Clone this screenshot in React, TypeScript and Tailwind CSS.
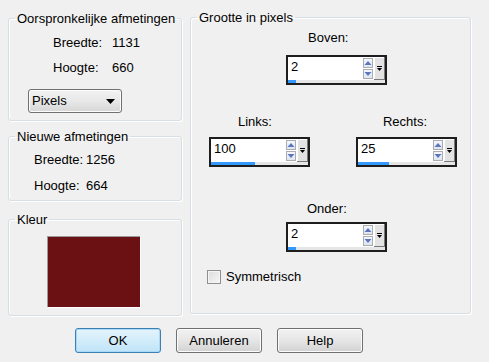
import React from "react";

const font = { fontFamily: '"Liberation Sans", Arial, sans-serif' };

function Group({
  title,
  className,
  children,
}: {
  title: string;
  className: string;
  children?: React.ReactNode;
}) {
  return (
    <fieldset
      className={`rounded-[3px] border border-[#d5dfe5] shadow-[inset_1px_1px_0_#fff,1px_1px_0_#fff] ${className}`}
    >
      <legend className="ml-[6px] px-[2px] leading-[15px]">{title}</legend>
      {children}
    </fieldset>
  );
}

function Arrow({ up }: { up?: boolean }) {
  return (
    <div className="flex h-[10px] w-[10px] items-center justify-center border border-[#a9acb3] bg-gradient-to-b from-[#f4f7fb] to-[#dfe6ef]">
      <svg width="8" height="6" viewBox="0 0 8 6">
        {up ? (
          <path d="M0.5 5 L4 1 L7.5 5 Z" fill="#5c75c0" />
        ) : (
          <path d="M0.5 1 L4 5 L7.5 1 Z" fill="#5c75c0" />
        )}
      </svg>
    </div>
  );
}

function Spin({ value, bar }: { value: string; bar: string }) {
  return (
    <div className="flex h-[30px] w-[101px] flex-col border-2 border-[#1e1e1e] bg-white">
      <div className="flex h-[23px]">
        <div className="flex-1 pl-[3px] pt-[2px] leading-[15px] text-black">{value}</div>
        <div className="mr-[1px] mt-[1px] flex flex-col gap-[1px]">
          <Arrow up />
          <Arrow />
        </div>
        <div className="flex h-[23px] w-[11px] items-center justify-center border-b border-r border-[#7a7a7a] bg-[#e3e3e3] shadow-[inset_1px_1px_0_#fff]">
          <svg width="7" height="7" viewBox="0 0 7 7">
            <rect x="1" y="1" width="5" height="1" fill="#000" />
            <path d="M1 3 L6 3 L3.5 6 Z" fill="#000" />
          </svg>
        </div>
      </div>
      <div className="h-[3px] bg-[#e6e6e6]">
        <div className={`h-[3px] bg-[#3399ff] ${bar}`} />
      </div>
    </div>
  );
}

function Button({ label, primary }: { label: string; primary?: boolean }) {
  return (
    <div
      className={
        primary
          ? "flex h-[25px] w-[86px] items-center justify-center rounded-[3px] border border-[#3c7fb1] bg-gradient-to-b from-[#e5f4fc] to-[#bfe4f8] shadow-[inset_0_0_0_1px_#a8d9f6] text-black"
          : "flex h-[25px] w-[86px] items-center justify-center rounded-[3px] border border-[#707070] bg-gradient-to-b from-[#f2f2f2] via-[#e6e6e6] to-[#d2d2d2] shadow-[inset_0_0_0_1px_#fcfcfc] text-black"
      }
    >
      {label}
    </div>
  );
}

export default function App() {
  return (
    <div
      className="h-[362px] w-[489px] overflow-hidden bg-[#f0f0f0] pl-[8px] pt-[10px] text-[13px] text-black"
      style={font}
    >
      <div className="flex items-start gap-[8px]">
        {/* left column */}
        <div className="flex flex-col pt-[1px]">
          <Group title="Oorspronkelijke afmetingen" className="h-[110px] w-[174px]">
            <div className="mt-[9px] flex flex-col gap-[10px] pl-[44px] leading-[15px]">
              <div className="grid grid-cols-[59px_auto]">
                <span>Breedte:</span>
                <span>1131</span>
              </div>
              <div className="grid grid-cols-[59px_auto]">
                <span>Hoogte:</span>
                <span>660</span>
              </div>
            </div>
            <div className="ml-[19px] mt-[14px] flex h-[24px] w-[94px] items-center justify-between rounded-[3px] border border-[#707070] bg-gradient-to-b from-[#f2f2f2] via-[#e8e8e8] to-[#d6d6d6] pl-[3px] pr-[6px] shadow-[inset_0_0_0_1px_#fcfcfc]">
              <span>Pixels</span>
              <svg width="9" height="5" viewBox="0 0 9 5">
                <path d="M0 0 L9 0 L4.5 5 Z" fill="#000" />
              </svg>
            </div>
          </Group>

          <Group title="Nieuwe afmetingen" className="mt-[8px] h-[72px] w-[174px]">
            <div className="mt-[8px] flex flex-col gap-[11px] pl-[25px] leading-[15px]">
              <div className="grid grid-cols-[52px_auto]">
                <span>Breedte:</span>
                <span>1256</span>
              </div>
              <div className="grid grid-cols-[52px_auto]">
                <span>Hoogte:</span>
                <span>664</span>
              </div>
            </div>
          </Group>

          <Group title="Kleur" className="mt-[11px] h-[104px] w-[174px]">
            <div className="ml-[38px] mt-[9px] h-[71px] w-[93px] border-l border-t border-l-[#9a9a9a] border-t-[#9a9a9a] bg-[#6c1113] shadow-[1px_1px_0_#fff]" />
          </Group>
        </div>

        {/* right column */}
        <Group title="Grootte in pixels" className="h-[304px] w-[281px]">
          <div className="ml-[117px] mt-[5px] leading-[15px]">Boven:</div>
          <div className="ml-[95px] mt-[10px]">
            <Spin value="2" bar="w-[8px]" />
          </div>

          <div className="mt-[29px] flex leading-[15px]">
            <span className="ml-[47px]">Links:</span>
            <span className="ml-[111px]">Rechts:</span>
          </div>
          <div className="mt-[8px] flex">
            <div className="ml-[18px]">
              <Spin value="100" bar="w-[44px]" />
            </div>
            <div className="ml-[46px]">
              <Spin value="25" bar="w-[31px]" />
            </div>
          </div>

          <div className="ml-[116px] mt-[34px] leading-[15px]">Onder:</div>
          <div className="ml-[95px] mt-[6px]">
            <Spin value="2" bar="w-[8px]" />
          </div>

          <div className="ml-[16px] mt-[17px] flex items-center gap-[5px] leading-[15px]">
            <div className="h-[14px] w-[14px] border border-[#8f8f8f] bg-gradient-to-br from-[#dcdcdc] to-[#f7f7f7] shadow-[inset_0_0_0_1px_#f4f4f4]" />
            <span>Symmetrisch</span>
          </div>
        </Group>
      </div>

      <div className="mt-[12px] flex gap-[15px] pl-[67px]">
        <Button label="OK" primary />
        <Button label="Annuleren" />
        <Button label="Help" />
      </div>
    </div>
  );
}
